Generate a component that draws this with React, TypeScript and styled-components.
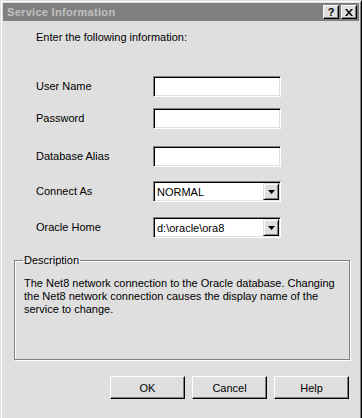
import React from "react";
import styled, { createGlobalStyle } from "styled-components";

const Global = createGlobalStyle`
  html, body { margin: 0; padding: 0; background: #dfdfdf; }
  body { font-family: "Liberation Sans", Arial, sans-serif; font-size: 11px; color: #000; }
  * { box-sizing: border-box; }
`;

const Window = styled.div`
  width: 362px;
  height: 422px;
  background: #dfdfdf;
  border: 1px solid;
  border-color: #dfdfdf #000 #000 #dfdfdf;
  box-shadow: inset 1px 1px #fff, inset -1px -1px #808080;
  padding: 2px;
  display: flex;
  flex-direction: column;
`;

const TitleBar = styled.div`
  height: 18px;
  background: #808080;
  display: flex;
  align-items: center;
  padding: 0 2px 0 4px;
`;

const Title = styled.div`
  flex: 1;
  color: #c0c0c0;
  font-weight: bold;
  font-size: 11px;
  letter-spacing: 0.3px;
`;

const TitleButtons = styled.div`
  display: flex;
  gap: 2px;
`;

const TitleButton = styled.div`
  width: 16px;
  height: 14px;
  background: #dfdfdf;
  border: 1px solid;
  border-color: #fff #000 #000 #fff;
  box-shadow: inset -1px -1px #808080;
  display: flex;
  align-items: center;
  justify-content: center;
  font-weight: bold;
  font-size: 11px;
  line-height: 1;
`;

const Content = styled.div`
  display: flex;
  flex-direction: column;
  flex: 1;
`;

const Prompt = styled.div`
  margin: 10px 0 0 33px;
  line-height: 13px;
`;

const Form = styled.div`
  display: flex;
  flex-direction: column;
  margin-left: 33px;
`;

const Row = styled.div<{ $gap: number }>`
  display: grid;
  grid-template-columns: 117px 128px;
  align-items: center;
  height: 21px;
  margin-top: ${(p) => p.$gap}px;
`;

const Label = styled.div`
  line-height: 13px;
`;

const TextBox = styled.div`
  height: 21px;
  background: #fff;
  border: 1px solid;
  border-color: #808080 #fff #fff #808080;
  box-shadow: inset 1px 1px #000, inset -1px -1px #dfdfdf;
`;

const Combo = styled(TextBox)`
  display: flex;
  align-items: stretch;
  padding: 1px;
`;

const ComboValue = styled.div`
  flex: 1;
  padding-left: 2px;
  display: flex;
  align-items: center;
`;

const ComboButton = styled.div`
  width: 16px;
  background: #dfdfdf;
  border: 1px solid;
  border-color: #dfdfdf #000 #000 #dfdfdf;
  box-shadow: inset 1px 1px #fff, inset -1px -1px #808080;
  display: flex;
  align-items: center;
  justify-content: center;
`;

const Group = styled.fieldset`
  margin: 16px 9px 0 11px;
  height: 106px;
  padding: 0 8px;
  border: 1px solid #808080;
  box-shadow: 1px 1px #fff, inset 1px 1px #fff;
`;

const Legend = styled.legend`
  padding: 0 1px;
  line-height: 13px;
  font-size: 11px;
`;

const Description = styled.p`
  margin: 10px 0 0 1px;
  line-height: 13px;
`;

const ButtonRow = styled.div`
  display: flex;
  justify-content: flex-end;
  gap: 7px;
  margin-top: 16px;
  padding-right: 10px;
`;

const Button = styled.div`
  width: 75px;
  height: 23px;
  background: #dfdfdf;
  border: 1px solid;
  border-color: #fff #000 #000 #fff;
  box-shadow: inset -1px -1px #808080;
  display: flex;
  align-items: center;
  justify-content: center;
`;

const Arrow = () => (
  <svg width="7" height="4" viewBox="0 0 7 4">
    <path d="M0 0h7L3.5 4z" fill="#000" />
  </svg>
);

const CloseGlyph = () => (
  <svg width="8" height="7" viewBox="0 0 8 7">
    <path d="M0 0h2l2 2.5L6 0h2L5 3.5 8 7H6L4 4.5 2 7H0l3-3.5z" fill="#000" />
  </svg>
);

const fields = [
  { label: "User Name", gap: 32 },
  { label: "Password", gap: 11 },
  { label: "Database Alias", gap: 17 },
];

const combos = [
  { label: "Connect As", value: "NORMAL", gap: 14 },
  { label: "Oracle Home", value: "d:\\oracle\\ora8", gap: 15 },
];

export default function App() {
  return (
    <>
      <Global />
      <Window>
        <TitleBar>
          <Title>Service Information</Title>
          <TitleButtons>
            <TitleButton>?</TitleButton>
            <TitleButton>
              <CloseGlyph />
            </TitleButton>
          </TitleButtons>
        </TitleBar>
        <Content>
          <Prompt>Enter the following information:</Prompt>
          <Form>
            {fields.map((f) => (
              <Row key={f.label} $gap={f.gap}>
                <Label>{f.label}</Label>
                <TextBox />
              </Row>
            ))}
            {combos.map((c) => (
              <Row key={c.label} $gap={c.gap}>
                <Label>{c.label}</Label>
                <Combo>
                  <ComboValue>{c.value}</ComboValue>
                  <ComboButton>
                    <Arrow />
                  </ComboButton>
                </Combo>
              </Row>
            ))}
          </Form>
          <Group>
            <Legend>Description</Legend>
            <Description>
              The Net8 network connection to the Oracle database. Changing
              the Net8 network connection causes the display name of the
              service to change.
            </Description>
          </Group>
          <ButtonRow>
            <Button>OK</Button>
            <Button>Cancel</Button>
            <Button>Help</Button>
          </ButtonRow>
        </Content>
      </Window>
    </>
  );
}
